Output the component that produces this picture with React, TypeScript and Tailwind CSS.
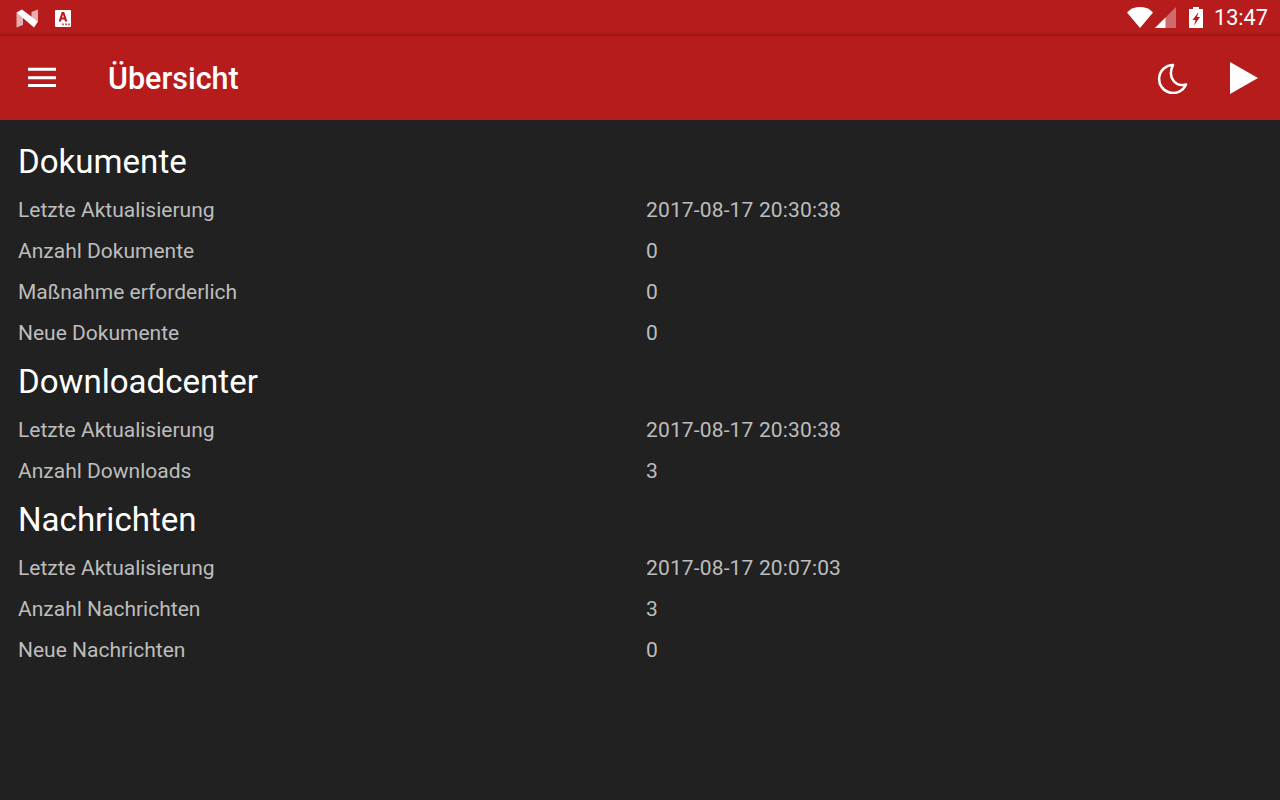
const Row = ({ label, value }: { label: string; value: string }) => (
  <div className="flex h-[41px] items-center text-[21px] text-[#bdbdbd]">
    <div className="w-[628px]">{label}</div>
    <div className="tracking-[0.15px]">{value}</div>
  </div>
);

const Heading = ({ children }: { children: string }) => (
  <h2 className="flex h-[56px] items-center text-[33.1px] font-normal text-white">{children}</h2>
);

export default function App() {
  return (
    <div className="flex h-[800px] w-[1280px] flex-col overflow-hidden bg-[#212121] font-['Roboto',sans-serif]">
      <div className="flex h-[36px] items-center justify-between bg-gradient-to-b from-[#b71c1c] from-[88%] to-[#951616] pl-[16px] pr-[12px]">
        <div className="flex items-center gap-[15px]">
          <svg width="24" height="24" viewBox="0 0 24 24">
            <path d="M0.5 6.5 L7 11 V19 L0.5 21.5 Z" fill="#fff" fillOpacity="0.65" />
            <path d="M15.5 6 L22 3.5 V15.5 L15.5 11 Z" fill="#fff" fillOpacity="0.65" />
            <path d="M0.5 6.5 L6 3.5 L22 15.5 L18 21.5 Z" fill="#fff" />
          </svg>
          <svg width="16" height="17" viewBox="0 0 16 17">
            <rect width="16" height="17" rx="1" fill="#fff" />
            <path d="M3.6 11.5 L6.8 2 H9.2 L12.4 11.5 H10 L9.5 9.6 H6.5 L6 11.5 Z M7.1 7.6 H8.9 L8 4.6 Z" fill="#b71c1c" fillRule="evenodd" />
            <path d="M7 13.5 H9 V15.2 H7 Z M10 13.5 H12 V15.2 H10 Z M13 13.5 H15 V15.2 H13 Z" fill="#c9605f" />
          </svg>
        </div>
        <div className="flex items-center">
          <svg width="26" height="21" viewBox="0 0 26 21" className="mr-[2px]">
            <path d="M0 5.5 C7 -1.8 19 -1.8 26 5.5 L13 21 Z" fill="#fff" />
          </svg>
          <svg width="21" height="21" viewBox="0 0 21 21" className="mr-[13px]">
            <path d="M21 0 V21 H0 Z" fill="#fff" fillOpacity="0.35" />
            <path d="M10.5 10.5 V21 H0 Z" fill="#fff" />
          </svg>
          <svg width="14" height="21" viewBox="0 0 14 21" className="mr-[11px]">
            <path fillRule="evenodd" d="M4 0 H10 V2 H14 V21 H0 V2 H4 Z M9.5 5 L3.5 13 H6.5 L5 18.5 L11 10 H8 Z" fill="#fff" />
          </svg>
          <span className="text-[21.7px] text-white">13:47</span>
        </div>
      </div>
      <header className="flex h-[84px] items-center bg-[#b71c1c] pl-[26px] pr-[22px]">
        <svg width="32" height="24" viewBox="0 0 32 24" className="mr-[50px]">
          <path d="M2 1.8 H30 V4.8 H2 Z M2 10.2 H30 V13.2 H2 Z M2 18 H30 V21 H2 Z" fill="#fff" />
        </svg>
        <h1 className="flex-1 pt-[2px] text-[30.5px] font-medium text-white">Übersicht</h1>
        <svg width="32" height="32" viewBox="0 0 32 32" className="mr-[42px]">
          <path d="M17 3 A14 14 0 1 0 30 22.5 C 21 25 10.5 17 17 3 Z" fill="none" stroke="#fff" strokeWidth="2.5" strokeLinejoin="round" />
        </svg>
        <svg width="28" height="32" viewBox="0 0 28 32">
          <path d="M0 0 L28 16 L0 32 Z" fill="#fff" />
        </svg>
      </header>
      <main className="flex-1 px-[18px] pt-[14px]">
        <Heading>Dokumente</Heading>
        <Row label="Letzte Aktualisierung" value="2017-08-17 20:30:38" />
        <Row label="Anzahl Dokumente" value="0" />
        <Row label="Maßnahme erforderlich" value="0" />
        <Row label="Neue Dokumente" value="0" />
        <Heading>Downloadcenter</Heading>
        <Row label="Letzte Aktualisierung" value="2017-08-17 20:30:38" />
        <Row label="Anzahl Downloads" value="3" />
        <Heading>Nachrichten</Heading>
        <Row label="Letzte Aktualisierung" value="2017-08-17 20:07:03" />
        <Row label="Anzahl Nachrichten" value="3" />
        <Row label="Neue Nachrichten" value="0" />
      </main>
    </div>
  );
}
